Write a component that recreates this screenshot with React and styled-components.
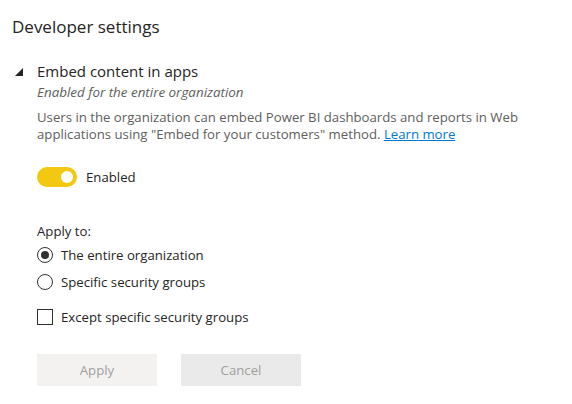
import React, { useState } from 'react';
import styled, { createGlobalStyle } from 'styled-components';

const GlobalStyle = createGlobalStyle`
  body {
    margin: 0;
    background: #ffffff;
    font-family: 'Open Sans', 'Noto Sans', sans-serif;
    color: #252423;
  }
`;

const Page = styled.div`
  width: 572px;
  height: 404px;
  padding: 14px 0 0 12px;
  box-sizing: border-box;
`;

const Title = styled.h1`
  margin: 0;
  font-size: 17px;
  font-weight: 400;
  line-height: 26px;
  color: #252423;
`;

const Section = styled.div`
  display: flex;
  margin-top: 21px;
`;

const CaretCol = styled.div`
  width: 25px;
  padding: 7px 0 0 3px;
  box-sizing: border-box;

  svg {
    display: block;
  }
`;

const Body = styled.div`
  display: flex;
  flex-direction: column;
`;

const SectionTitle = styled.div`
  font-size: 15px;
  line-height: 20px;
  color: #252423;
`;

const Subtitle = styled.div`
  margin-top: 2px;
  font-size: 13.4px;
  font-style: italic;
  line-height: 18px;
  color: #605e5c;
`;

const Description = styled.p`
  margin: 8px 0 0;
  font-size: 13.2px;
  line-height: 17px;
  color: #605e5c;
  width: 500px;
`;

const Link = styled.a`
  color: #0078d4;
  text-decoration: underline;
`;

const ToggleRow = styled.label`
  display: flex;
  align-items: center;
  gap: 9px;
  margin-top: 24px;
  font-size: 13.2px;
  color: #252423;
`;

const Track = styled.span`
  position: relative;
  flex: none;
  width: 40px;
  height: 20px;
  border-radius: 10px;
  background: ${p => (p.on ? '#f2c811' : '#c8c6c4')};
`;

const Knob = styled.span`
  position: absolute;
  top: 4px;
  left: ${p => (p.on ? '24px' : '4px')};
  width: 12px;
  height: 12px;
  border-radius: 50%;
  background: #ffffff;
`;

const GroupLabel = styled.div`
  margin-top: 35px;
  font-size: 13.2px;
  line-height: 18px;
  color: #252423;
`;

const OptionRow = styled.label`
  display: flex;
  align-items: center;
  gap: 8px;
  height: 18px;
  margin-top: ${p => p.gap || 9}px;
  font-size: 13.2px;
  color: #252423;
`;

const Radio = styled.span`
  position: relative;
  flex: none;
  width: 16px;
  height: 16px;
  border: 1px solid #323130;
  border-radius: 50%;
  box-sizing: border-box;

  &::after {
    content: '';
    display: ${p => (p.checked ? 'block' : 'none')};
    position: absolute;
    top: 3px;
    left: 3px;
    width: 8px;
    height: 8px;
    border-radius: 50%;
    background: #323130;
  }
`;

const Checkbox = styled.span`
  flex: none;
  width: 16px;
  height: 16px;
  border: 1px solid #323130;
  box-sizing: border-box;
`;

const Buttons = styled.div`
  display: flex;
  gap: 24px;
  margin-top: 28px;
`;

const Button = styled.button`
  width: 120px;
  height: 32px;
  border: none;
  font-family: inherit;
  font-size: 13.2px;
  color: #a19f9d;
  background: ${p => p.bg};
`;

const Caret = () => (
  <svg width="8" height="8" viewBox="0 0 8 8">
    <polygon points="0,8 8,8 8,0" fill="#252423" />
  </svg>
);

export default function App() {
  const [enabled] = useState(true);
  return (
    <Page>
      <GlobalStyle />
      <Title>Developer settings</Title>
      <Section>
        <CaretCol>
          <Caret />
        </CaretCol>
        <Body>
          <SectionTitle>Embed content in apps</SectionTitle>
          <Subtitle>Enabled for the entire organization</Subtitle>
          <Description>
            Users in the organization can embed Power BI dashboards and reports in Web
            applications using "Embed for your customers" method. <Link href="#">Learn more</Link>
          </Description>
          <ToggleRow>
            <Track on={enabled}>
              <Knob on={enabled} />
            </Track>
            Enabled
          </ToggleRow>
          <GroupLabel>Apply to:</GroupLabel>
          <OptionRow gap={6}>
            <Radio checked />
            The entire organization
          </OptionRow>
          <OptionRow>
            <Radio />
            Specific security groups
          </OptionRow>
          <OptionRow gap={17}>
            <Checkbox />
            Except specific security groups
          </OptionRow>
          <Buttons>
            <Button bg="#f3f2f1">Apply</Button>
            <Button bg="#eaeaea">Cancel</Button>
          </Buttons>
        </Body>
      </Section>
    </Page>
  );
}
